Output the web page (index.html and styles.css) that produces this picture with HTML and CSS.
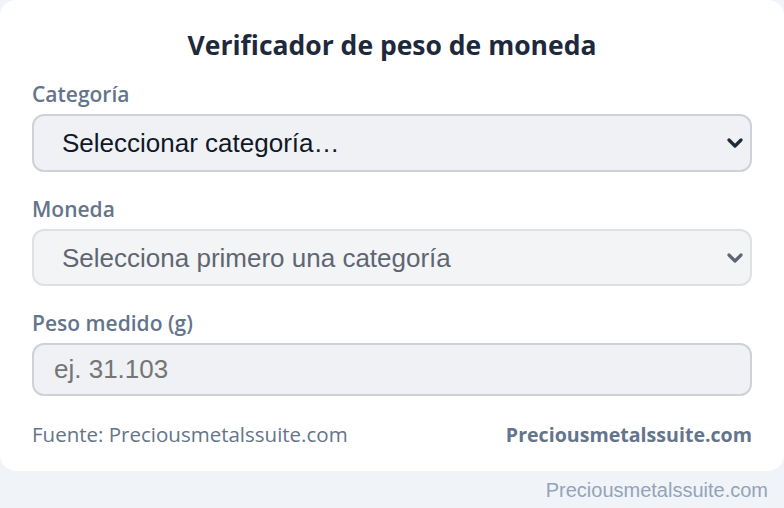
FILE: index.html
```html
<!DOCTYPE html>
<html lang="es">

<head>
    <meta charset="UTF-8">
    <meta name="viewport" content="width=device-width, initial-scale=1.0">
    <title>Verificador de peso de moneda</title>
    <link rel="stylesheet" href="styles.css">
</head>

<body>
    <div class="card">
        <h2 class="title">Verificador de peso de moneda</h2>

        <label class="label" for="cat">Categoría</label>
        <div class="select-wrap">
            <select id="cat" class="field">
                <option>Seleccionar categoría…</option>
            </select>
            <svg class="chevron" width="16" height="10" viewBox="0 0 16 10">
                <path d="M2 2 L8 8 L14 2" fill="none" stroke="currentColor" stroke-width="3.2" stroke-linecap="round" stroke-linejoin="round"/>
            </svg>
        </div>

        <label class="label" for="coin">Moneda</label>
        <div class="select-wrap disabled">
            <select id="coin" class="field" disabled>
                <option>Selecciona primero una categoría</option>
            </select>
            <svg class="chevron" width="16" height="10" viewBox="0 0 16 10">
                <path d="M2 2 L8 8 L14 2" fill="none" stroke="currentColor" stroke-width="3.2" stroke-linecap="round" stroke-linejoin="round"/>
            </svg>
        </div>

        <label class="label" for="peso">Peso medido (g)</label>
        <input id="peso" class="field input" type="text" placeholder="ej. 31.103">

        <div class="foot">
            <span>Fuente: Preciousmetalssuite.com</span>
            <b>Preciousmetalssuite.com</b>
        </div>
    </div>
    <div class="credit">Preciousmetalssuite.com</div>
</body>

</html>
```

FILE: styles.css
```css
* {
    margin: 0;
    padding: 0;
    box-sizing: border-box;
}

body {
    background-color: #f0f3f8;
    font-family: "Open Sans", "Noto Sans", sans-serif;
}

.card {
    display: flex;
    flex-direction: column;
    background-color: #fff;
    border-radius: 16px;
    padding: 29px 32px 24px;
}

.title {
    text-align: center;
    font-size: 26.5px;
    font-weight: 700;
    line-height: 32px;
    color: #1e293b;
    margin-bottom: 21px;
}

.label {
    font-size: 21px;
    font-weight: 600;
    line-height: 24px;
    color: #64748b;
    margin-bottom: 8px;
}

.select-wrap {
    position: relative;
    color: #1e293b;
    margin-bottom: 25px;
}

.select-wrap.disabled {
    color: #5f6673;
}

.field {
    display: block;
    width: 100%;
    height: 58px;
    -webkit-appearance: none;
    appearance: none;
    border: 2px solid #cdd2d9;
    border-radius: 12px;
    background-color: #eff1f4;
    padding: 0 48px 0 28px;
    font-family: "Liberation Sans", Arial, sans-serif;
    font-size: 26px;
    color: #111827;
    outline: none;
}

.disabled .field {
    height: 57px;
    border-color: #dde0e5;
    background-color: #f3f4f5;
    color: #5f6673;
    opacity: 1;
}

.chevron {
    position: absolute;
    right: 9px;
    top: 50%;
    transform: translateY(-50%);
}

.input {
    height: 53px;
    padding: 0 20px;
}

.input::placeholder {
    color: #757575;
}

.foot {
    display: flex;
    justify-content: space-between;
    align-items: baseline;
    margin-top: 26px;
    font-size: 20.5px;
    line-height: 24px;
    color: #64748b;
}

.foot b {
    font-size: 19.6px;
    font-weight: 700;
}

.credit {
    text-align: right;
    padding: 7px 16px 0;
    font-family: "Liberation Sans", Arial, sans-serif;
    font-size: 20px;
    line-height: 24px;
    color: #94a3b8;
}
```
